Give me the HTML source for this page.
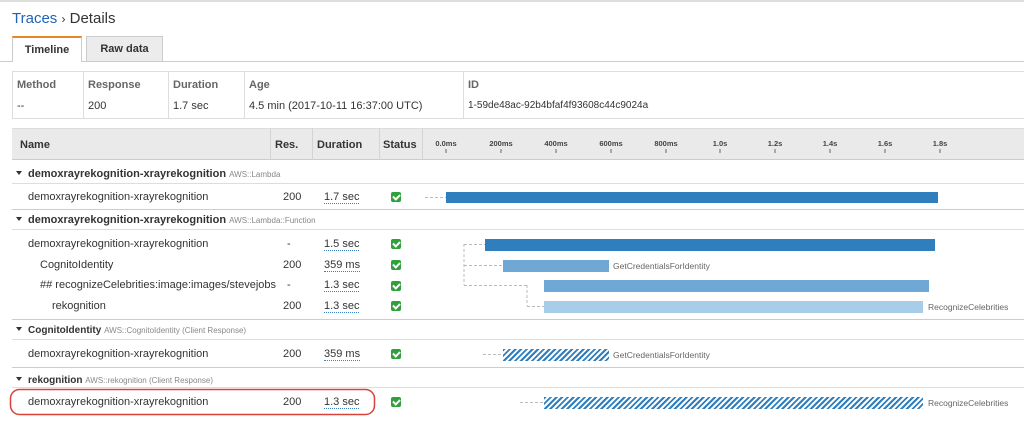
<!DOCTYPE html>
<html><head><meta charset="utf-8"><style>
*{margin:0;padding:0;box-sizing:border-box}
body{width:1024px;height:424px;overflow:hidden;background:#fff;font-family:"Liberation Sans",sans-serif;color:#333;position:relative}
.a{position:absolute;white-space:nowrap}
.b{font-weight:bold}
.s{font-size:11px}
.g{color:#888;font-size:8px;font-weight:normal}
.d{border-bottom:1px dotted #3b7fc4}
.ck{position:absolute;width:10px;height:10px;background:#2ea13a;border-radius:2px;left:391px}
.ck:after{content:"";position:absolute;left:3px;top:1px;width:3px;height:5px;border:solid #fff;border-width:0 2px 2px 0;transform:rotate(45deg)}
.hl{position:absolute;left:12px;right:0;height:1px;background:#ddd}
.hatch{background:repeating-linear-gradient(135deg,#2f7fbf 0 2px,#fff 2px 4px)}
</style></head><body>
<div class="a" style="left:0;top:0;width:1024px;height:2px;background:#ddd"></div>
<div class="a" style="left:12px;top:10px;font-size:15px"><span style="color:#1f63b8">Traces</span> <span style="font-size:12px">›</span> Details</div>
<div class="a b" style="left:12px;top:36px;width:70px;height:26px;border:1px solid #ccc;border-top:2px solid #e8852a;border-bottom:none;background:#fff;font-size:11px;text-align:center;line-height:24px;z-index:2">Timeline</div>
<div class="a b" style="left:86px;top:36px;width:77px;height:25px;border:1px solid #ccc;border-bottom:none;background:#ececec;font-size:11px;text-align:center;line-height:24px">Raw data</div>
<div class="a" style="left:0;top:61px;width:1024px;height:1px;background:#ccc"></div>
<!-- summary -->
<div class="a" style="left:12px;top:71px;width:1012px;height:48px;border:1px solid #ddd;border-right:none"></div>
<div class="a" style="left:83px;top:71px;width:1px;height:48px;background:#ddd"></div>
<div class="a" style="left:168px;top:71px;width:1px;height:48px;background:#ddd"></div>
<div class="a" style="left:244px;top:71px;width:1px;height:48px;background:#ddd"></div>
<div class="a" style="left:463px;top:71px;width:1px;height:48px;background:#ddd"></div>
<div class="a b s" style="left:17px;top:79px;color:#666">Method</div>
<div class="a b s" style="left:88px;top:79px;color:#666">Response</div>
<div class="a b s" style="left:173px;top:79px;color:#666">Duration</div>
<div class="a b s" style="left:249px;top:79px;color:#666">Age</div>
<div class="a b s" style="left:468px;top:79px;color:#666">ID</div>
<div class="a s" style="left:17px;top:100px">--</div>
<div class="a s" style="left:88px;top:100px">200</div>
<div class="a s" style="left:173px;top:100px">1.7 sec</div>
<div class="a s" style="left:249px;top:100px">4.5 min (2017-10-11 16:37:00 UTC)</div>
<div class="a" style="left:468px;top:100px;font-size:10px">1-59de48ac-92b4bfaf4f93608c44c9024a</div>
<!-- table header -->
<div class="a" style="left:12px;top:128px;width:1012px;height:32px;background:#eaeaea;border-top:1px solid #ddd;border-bottom:1px solid #ccc"></div>
<div class="a" style="left:270px;top:128px;width:1px;height:32px;background:#d4d4d4"></div>
<div class="a" style="left:312px;top:128px;width:1px;height:32px;background:#d4d4d4"></div>
<div class="a" style="left:379px;top:128px;width:1px;height:32px;background:#d4d4d4"></div>
<div class="a" style="left:422px;top:128px;width:1px;height:32px;background:#d4d4d4"></div>
<div class="a b s" style="left:20px;top:139px">Name</div>
<div class="a b s" style="left:275px;top:139px">Res.</div>
<div class="a b s" style="left:317px;top:139px">Duration</div>
<div class="a b s" style="left:383px;top:139px">Status</div>
<svg class="a" style="left:0;top:0" width="1024" height="424">
<g font-family="Liberation Sans" font-size="7.5" font-weight="bold" fill="#444" text-anchor="middle">
<text x="446" y="146">0.0ms</text><text x="501" y="146">200ms</text><text x="556" y="146">400ms</text><text x="611" y="146">600ms</text><text x="666" y="146">800ms</text><text x="720" y="146">1.0s</text><text x="775" y="146">1.2s</text><text x="830" y="146">1.4s</text><text x="885" y="146">1.6s</text><text x="940" y="146">1.8s</text>
</g>
<g stroke="#666" stroke-width="1"><path d="M446 149v4M501 149v4M556 149v4M611 149v4M666 149v4M720 149v4M775 149v4M830 149v4M885 149v4M940 149v4"/></g>
<g stroke="#bbb" stroke-dasharray="3,2" fill="none">
<path d="M425 197.5H446"/>
<path d="M464 244.5H485M464 244v41M464 265.5H503M464 285.5H527M527 285v21M527 306.5H544"/>
<path d="M483 354.5H503"/>
<path d="M520 402.5H544"/>
</g>
<g fill="#333"><path d="M16 171l6 0-3 4z"/><path d="M16 217l6 0-3 4z"/><path d="M16 327l6 0-3 4z"/><path d="M16 377l6 0-3 4z"/></g>
<rect x="10.5" y="389.5" width="364" height="25" rx="9" fill="none" stroke="#d9413b" stroke-width="1.5"/>
</svg>
<!-- group headers -->
<div class="a b s" style="left:28px;top:168px">demoxrayrekognition-xrayrekognition <span class="g">AWS::Lambda</span></div>
<div class="hl" style="top:183px"></div>
<div class="hl" style="top:209px;background:#ccc"></div>
<div class="a b s" style="left:28px;top:214px">demoxrayrekognition-xrayrekognition <span class="g">AWS::Lambda::Function</span></div>
<div class="hl" style="top:229px"></div>
<div class="hl" style="top:319px;background:#ccc"></div>
<div class="a b" style="left:28px;top:325px;font-size:10px">CognitoIdentity <span class="g">AWS::CognitoIdentity (Client Response)</span></div>
<div class="hl" style="top:339px"></div>
<div class="hl" style="top:367px;background:#ccc"></div>
<div class="a b" style="left:28px;top:375px;font-size:10px">rekognition <span class="g">AWS::rekognition (Client Response)</span></div>
<div class="hl" style="top:387px"></div>
<!-- rows -->
<div class="a s" style="left:28px;top:191px">demoxrayrekognition-xrayrekognition</div>
<div class="a s" style="left:283px;top:191px">200</div>
<div class="a s d" style="left:324px;top:191px">1.7 sec</div>
<div class="ck" style="top:192px"></div>
<div class="a" style="left:446px;top:192px;width:492px;height:11px;background:#2f7fbf"></div>

<div class="a s" style="left:28px;top:238px">demoxrayrekognition-xrayrekognition</div>
<div class="a s" style="left:287px;top:238px">-</div>
<div class="a s d" style="left:324px;top:238px">1.5 sec</div>
<div class="ck" style="top:239px"></div>
<div class="a" style="left:485px;top:239px;width:450px;height:12px;background:#2f7fbf"></div>

<div class="a s" style="left:40px;top:259px">CognitoIdentity</div>
<div class="a s" style="left:283px;top:259px">200</div>
<div class="a s d" style="left:324px;top:259px">359 ms</div>
<div class="ck" style="top:260px"></div>
<div class="a" style="left:503px;top:260px;width:106px;height:12px;background:#6fa8d4"></div>
<div class="a" style="left:613px;top:261px;font-size:8.5px;color:#666">GetCredentialsForIdentity</div>

<div class="a s" style="left:40px;top:279px">## recognizeCelebrities:image:images/stevejobs</div>
<div class="a s" style="left:287px;top:279px">-</div>
<div class="a s d" style="left:324px;top:279px">1.3 sec</div>
<div class="ck" style="top:281px"></div>
<div class="a" style="left:544px;top:280px;width:385px;height:12px;background:#6fa8d4"></div>

<div class="a s" style="left:52px;top:300px">rekognition</div>
<div class="a s" style="left:283px;top:300px">200</div>
<div class="a s d" style="left:324px;top:300px">1.3 sec</div>
<div class="ck" style="top:301px"></div>
<div class="a" style="left:544px;top:301px;width:379px;height:12px;background:#a8cde8"></div>
<div class="a" style="left:928px;top:302px;font-size:8.5px;color:#666">RecognizeCelebrities</div>

<div class="a s" style="left:28px;top:348px">demoxrayrekognition-xrayrekognition</div>
<div class="a s" style="left:283px;top:348px">200</div>
<div class="a s d" style="left:324px;top:348px">359 ms</div>
<div class="ck" style="top:349px"></div>
<div class="a hatch" style="left:503px;top:349px;width:106px;height:12px"></div>
<div class="a" style="left:613px;top:350px;font-size:8.5px;color:#666">GetCredentialsForIdentity</div>

<div class="a s" style="left:28px;top:396px">demoxrayrekognition-xrayrekognition</div>
<div class="a s" style="left:283px;top:396px">200</div>
<div class="a s d" style="left:324px;top:396px">1.3 sec</div>
<div class="ck" style="top:397px"></div>
<div class="a hatch" style="left:544px;top:397px;width:379px;height:12px"></div>
<div class="a" style="left:928px;top:398px;font-size:8.5px;color:#666">RecognizeCelebrities</div>
</body></html>
